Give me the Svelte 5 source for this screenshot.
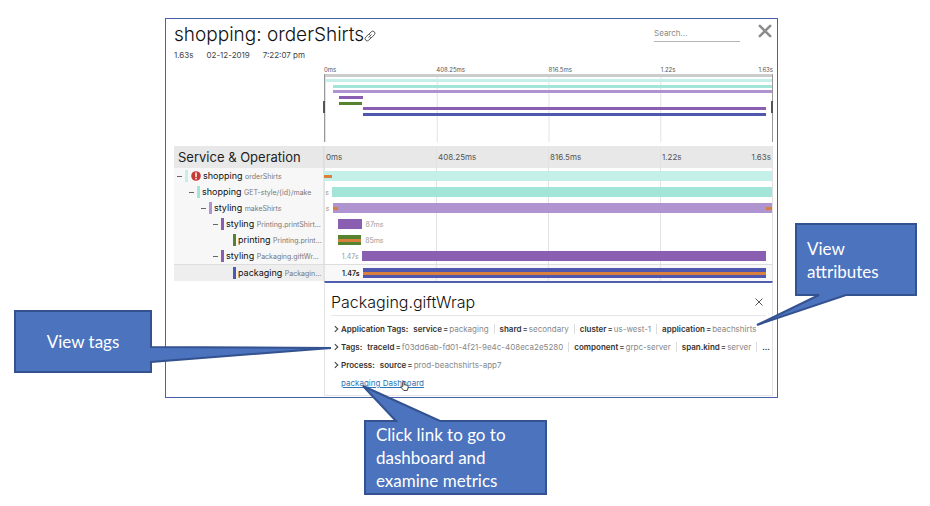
<script>
  const ticks = ['0ms', '408.25ms', '816.5ms', '1.22s'];
  const endTick = '1.63s';

  // start / width are percentages of the whole trace
  const spans = [
    { service: 'shopping', op: 'orderShirts', depth: 0, start: 0, width: 100, color: '#c5f0e9', error: true, marks: [[0, 1.7]] },
    { service: 'shopping', op: 'GET-style/{id}/make', depth: 1, start: 1.8, width: 98.2, color: '#a3e6d9', before: 's', marks: [] },
    { service: 'styling', op: 'makeShirts', depth: 2, start: 1.9, width: 98.1, color: '#b094cf', before: 's', marks: [[0, 1.3], [98.7, 1.3]] },
    { service: 'styling', op: 'Printing.printShirt...', depth: 3, start: 3.1, width: 5.3, color: '#8a5fb1', after: '87ms', marks: [] },
    { service: 'printing', op: 'Printing.print...', depth: 4, start: 3.1, width: 5.2, color: '#55832f', after: '85ms', leaf: true, marks: [[0, 100]] },
    { service: 'styling', op: 'Packaging.giftWr...', depth: 3, start: 8.4, width: 90.3, color: '#8a5fb1', before: '1.47s', marks: [] },
    { service: 'packaging', op: 'Packagin...', depth: 4, start: 8.6, width: 90.1, color: '#4f57ae', before: '1.47s', leaf: true, selected: true, marks: [[0, 100]] }
  ];

  const tagRows = [
    { label: 'Application Tags:', tags: [['service', 'packaging'], ['shard', 'secondary'], ['cluster', 'us-west-1'], ['application', 'beachshirts']] },
    { label: 'Tags:', more: true, tags: [['traceId', 'f03dd6ab-fd01-4f21-9e4c-408eca2e5280'], ['component', 'grpc-server'], ['span.kind', 'server']] },
    { label: 'Process:', tags: [['source', 'prod-beachshirts-app7']] }
  ];
</script>

<div class="page">
  <main class="panel">
    <header>
      <div class="heading">
        <h1>shopping: orderShirts</h1>
        <svg class="link-icon" viewBox="0 0 20 20" fill="none" stroke="#444" stroke-width="1.5" stroke-linecap="round">
          <path d="M8 12 L12 8" />
          <path d="M8.2 7 L12 3 A3.6 3.6 0 0 1 17.2 8 L13.2 12 A3.4 3.4 0 0 1 10.4 13" />
          <path d="M11.8 13 L8 17 A3.6 3.6 0 0 1 2.8 12 L6.8 8 A3.4 3.4 0 0 1 9.6 7" />
        </svg>
        <input class="search" type="text" placeholder="Search..." aria-label="Search" />
        <button class="close" aria-label="Close trace">
          <svg viewBox="0 0 14 14" width="14" height="14" stroke="#8c8c8c" stroke-width="2.6" stroke-linecap="round"><path d="M1.8 1.8 L12.2 12.2 M12.2 1.8 L1.8 12.2" /></svg>
        </button>
      </div>
      <div class="meta"><span>1.63s</span><span>02-12-2019</span><span>7:22:07 pm</span></div>
    </header>

    <section class="overview">
      <div class="ticks small">
        {#each ticks as t}<span>{t}</span>{/each}
        <span class="end">{endTick}</span>
      </div>
      <div class="minimap grid">
        <div class="scale"></div>
        <div class="mini-bars">
          {#each spans as s}
            <i style="margin-left:{s.start}%;width:{s.width}%;background:{s.color}"></i>
          {/each}
        </div>
        <b class="handle"></b><b class="handle right"></b>
      </div>
    </section>

    <section class="trace">
      <div class="row head">
        <h2 class="name">Service &amp; Operation</h2>
        <div class="ticks grid">
          {#each ticks as t}<span>{t}</span>{/each}
          <span class="end">{endTick}</span>
        </div>
      </div>
      {#each spans as s}
        <div class="row" class:selected={s.selected}>
          <div class="name" style="padding-left:{s.depth * 12}px">
            {#if s.leaf}<span class="toggle"></span>{:else}<button class="toggle" aria-label="Collapse {s.service}"></button>{/if}
            <i class="swatch" style="background:{s.color}"></i>
            {#if s.error}
              <svg class="error" viewBox="0 0 10 10" width="10" height="10"><circle cx="5" cy="5" r="4.8" fill="#c43b35" /><path d="M5 2.1 V5.6" stroke="#fff" stroke-width="1.5" stroke-linecap="round" /><circle cx="5" cy="7.6" r=".85" fill="#fff" /></svg>
            {/if}
            <div class="label">{s.service} <small>{s.op}</small></div>
          </div>
          <div class="track grid">
            <div class="before" style="width:{s.start}%">{#if s.before}<span>{s.before}</span>{/if}</div>
            <div class="bar" style="width:{s.width}%;background:{s.color}">
              {#each s.marks as m}<i style="left:{m[0]}%;width:{m[1]}%"></i>{/each}
            </div>
            {#if s.after}<span class="after">{s.after}</span>{/if}
          </div>
        </div>
      {/each}
    </section>

    <section class="detail">
      <div class="detail-head">
        <h3>Packaging.giftWrap</h3>
        <button aria-label="Close details">
          <svg viewBox="0 0 8 8" width="8" height="8" stroke="#555"><path d="M.5 .5 L7.5 7.5 M7.5 .5 L.5 7.5" /></svg>
        </button>
      </div>
      {#each tagRows as r}
        <div class="tags">
          <button aria-label="Expand {r.label}">
            <svg viewBox="0 0 5 8" width="5" height="8" fill="none" stroke="#444" stroke-width="1.1"><path d="M.8 1.2 L3.8 4 L.8 6.8" /></svg>
          </button>
          <strong class="title">{r.label}</strong>
          {#each r.tags as [k, v]}<span class="tag"><strong>{k}</strong><em>=</em>{v}</span>{/each}
          {#if r.more}<span class="tag"><strong>...</strong></span>{/if}
        </div>
      {/each}
      <div class="dash"><a href="#dashboard">packaging Dashboard</a>
        <svg class="hand" viewBox="0 0 16 18" width="9" height="10"><path d="M5 10 V2.5 Q5 1 6.2 1 Q7.5 1 7.5 2.5 V7 Q8.8 6 10 7.3 Q11.4 6.7 12.3 8 Q14.5 7.6 14.5 9.8 V12.5 L13 17 H6.5 L2 11.5 Q1 9.8 2.4 9.3 Q3.6 9 5 11" fill="#fff" stroke="#222" stroke-width="1.5" /></svg>
      </div>
    </section>
  </main>

  <aside class="callout tags-note">
    <svg width="138" height="63"><path d="M1 1 H137 V37 L317 38 L137 52 V62 H1 Z" /></svg>
    <p>View tags</p>
  </aside>
  <aside class="callout attributes-note">
    <svg width="122" height="73"><path d="M1 1 H121 V72 H51 L-38 102 L24 72 H1 Z" /></svg>
    <p>View<br />attributes</p>
  </aside>
  <aside class="callout link-note">
    <svg width="183" height="75"><path d="M1 1 H32 L-1 -34 L76 1 H182 V74 H1 Z" /></svg>
    <p>Click link to go to<br />dashboard and<br />examine metrics</p>
  </aside>
</div>

<style>
  :global(body) { background: #fff; }
  * { box-sizing: border-box; }
  .page {
    position: relative;
    padding: 18px 152px 107px 165px;
    font-family: Inter, "Liberation Sans", sans-serif;
    font-size: 8px;
    color: #333;
  }
  h1, h2, h3, p { margin: 0; font-weight: 400; }
  button { border: 0; padding: 0; background: none; display: flex; align-items: center; justify-content: center; }
  svg { display: block; flex: none; }

  .panel { border: 1px solid #4663aa; padding: 0 4px 1px 8px; background: #fff; }

  .heading { display: flex; align-items: center; height: 30px; }
  h1 { padding-top: 2px; font-size: 19px; font-weight: 300; line-height: 28px; color: #111; white-space: nowrap; }
  .link-icon { width: 12px; height: 12px; margin: 4px auto 0 0; }
  .search {
    width: 86px; height: 14px; margin: 2px 18px 0 0; padding: 0 0 3px;
    border: 0; border-bottom: 1px solid #b5b5b5; border-radius: 0;
    font: inherit; background: none; outline: 0;
  }
  .search::placeholder { color: #8a8a8a; opacity: 1; }
  .close { margin: -6px 1px 0 0; }
  .meta { display: flex; gap: 13px; height: 17px; line-height: 12px; color: #444; }

  .overview { margin-left: 150px; }
  .ticks { display: flex; position: relative; color: #555; }
  .ticks span { flex: 0 0 25%; padding-left: 2px; }
  .ticks .end { position: absolute; right: 1px; top: 0; padding: 0; }
  .small { font-size: 6px; line-height: 8px; color: #555; }
  .small span { padding-left: 0; }
  .small .end { right: 0; }
  .grid {
    background: linear-gradient(to right, #e2e2e2 1px, transparent 1px) 0 0 / 25% 100%;
    border-right: 1px solid #e2e2e2;
  }
  .minimap {
    position: relative; height: 68px; margin-bottom: 4px;
    border-left: 1px solid #999; border-right: 1px solid #999;
  }
  .scale { height: 3px; background: #ccc; }
  .mini-bars { display: flex; flex-direction: column; justify-content: space-between; height: 37px; margin-top: 2px; }
  .mini-bars i { height: 3px; }
  .handle { position: absolute; left: -2px; top: 27px; width: 2px; height: 12px; background: #555; }
  .handle.right { left: auto; right: -1px; }

  .row { display: flex; height: 16px; }
  .name { flex: 0 0 150px; display: flex; align-items: center; background: #f7f7f7; border-right: 1px solid #e6e6e6; overflow: hidden; }
  .head { height: 22px; background: #e8e8e8; }
  .head .name { background: none; padding-left: 4px; font-size: 13px; color: #222; border-color: #ddd; white-space: nowrap; }
  .head .ticks { flex: 1; line-height: 22px; background-color: #e8e8e8; }
  .toggle { flex: none; width: 11px; height: 12px; padding-right: 1px; }
  button.toggle::before { content: ""; width: 5px; height: 1px; background: #666; }
  .swatch { flex: none; width: 3px; height: 12px; margin-right: 2px; }
  .error { margin: 0 2px 0 1px; }
  .label { flex: 1; min-width: 0; font-size: 9px; line-height: 14px; color: #111; white-space: nowrap; overflow: hidden; text-overflow: ellipsis; }
  .label small { font-size: 7px; color: #777; }
  .track { flex: 1; min-width: 0; display: flex; align-items: center; overflow: hidden; font-size: 7px; }
  .before { flex: none; display: flex; justify-content: flex-end; color: #999; }
  .before span { padding-right: 3px; }
  .after { padding-left: 4px; color: #999; }
  .bar { flex: none; position: relative; height: 10px; }
  .bar i { position: absolute; top: 4px; height: 3px; background: #d9803f; }
  .selected { height: 17px; border-top: 1px solid #ddd; }
  .selected .name { background: #eee; }
  .selected .track { background-color: #f8f8f8; }
  .selected .before { color: #222; font-weight: 600; }

  .detail { margin-left: 150px; padding: 0 6px 3px; border: 1px solid #e4e4e4; border-top: 2px solid #4f5fb0; }
  .detail-head { display: flex; align-items: center; justify-content: space-between; height: 33px; padding: 5px 3px 0 0; margin-bottom: 4px; border-bottom: 1px solid #e6e6e6; }
  h3 { font-size: 16px; font-weight: 300; color: #111; }
  .tags { display: flex; align-items: center; height: 18px; padding-left: 3px; color: #888; white-space: nowrap; }
  .tags strong { color: #333; font-weight: 600; }
  .title { margin: 0 5px 0 2px; }
  .tag em { font-style: normal; color: #333; margin: 0 1px; }
  .tag + .tag { border-left: 1px solid #ddd; margin-left: 5px; padding-left: 5px; }
  .dash { position: relative; height: 18px; line-height: 18px; padding-left: 10px; }
  .dash a { color: #2f74b5; text-decoration: underline; }
  .hand { position: absolute; left: 69px; top: 7px; }

  .callout { position: absolute; display: flex; align-items: center; font-family: Lato, "Liberation Sans", sans-serif; font-size: 17px; line-height: 23px; color: #fff; }
  .callout svg { position: absolute; left: 0; top: 0; overflow: visible; fill: #4b73be; stroke: #34528f; stroke-width: 2; }
  .callout p { position: relative; white-space: nowrap; }
  .tags-note { left: 14px; top: 310px; width: 138px; height: 63px; justify-content: center; }
  .attributes-note { right: 13px; top: 223px; width: 122px; height: 73px; padding-left: 12px; }
  .link-note { left: 364px; top: 420px; width: 183px; height: 75px; padding-left: 12px; }
</style>
